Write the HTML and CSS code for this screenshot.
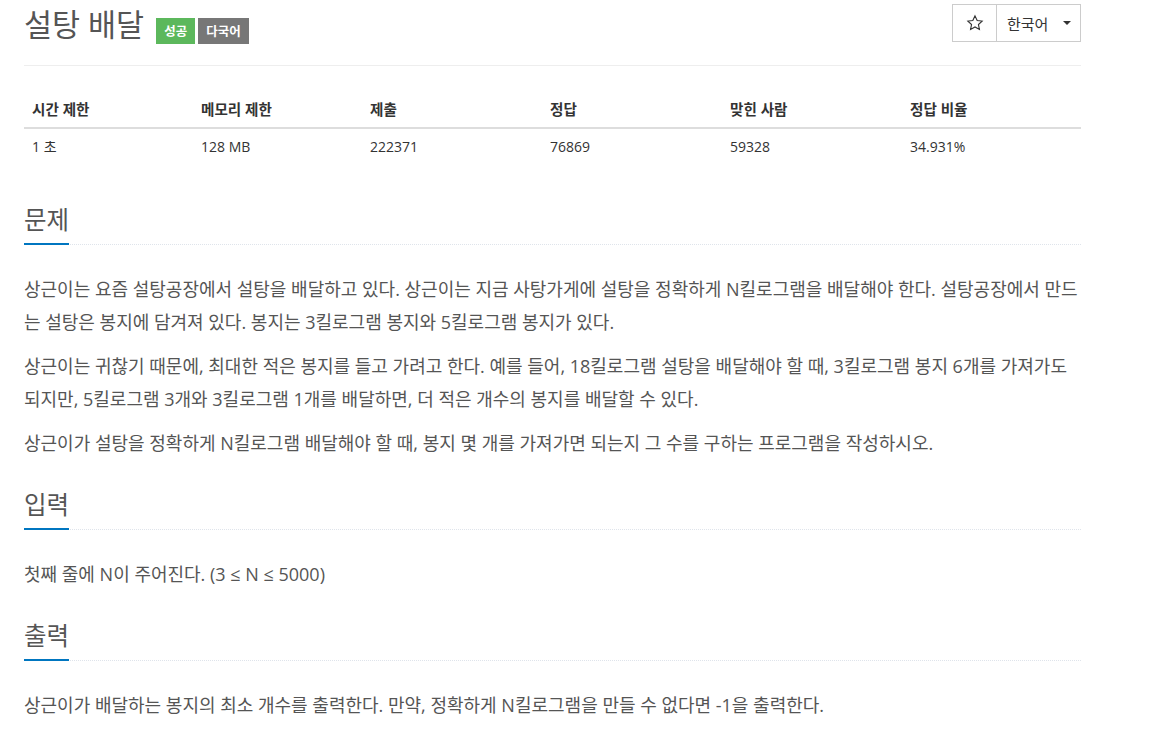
FILE: index.html
```html
<!DOCTYPE html>
<html lang="ko">
<head>
<meta charset="utf-8">
<title>설탕 배달</title>
<link rel="stylesheet" href="styles.css">
</head>
<body>
<div class="page">
  <header class="page-header">
    <div class="title-row">
      <h1 class="title">설탕 배달</h1>
      <span class="label label-success">성공</span>
      <span class="label label-default">다국어</span>
    </div>
    <div class="btn-group">
      <button class="btn btn-star" type="button">
        <svg class="star-icon" width="18" height="18" viewBox="0 0 24 24"><polygon points="12,2.5 14.9,8.6 21.5,9.4 16.6,14 17.9,20.6 12,17.3 6.1,20.6 7.4,14 2.5,9.4 9.1,8.6" fill="none" stroke="#333" stroke-width="1.5" stroke-linejoin="miter"/></svg>
      </button>
      <button class="btn btn-lang" type="button">한국어<span class="caret"></span></button>
    </div>
  </header>

  <table class="info-table">
    <colgroup>
      <col class="col-narrow">
      <col class="col-narrow">
      <col class="col-wide">
      <col class="col-wide">
      <col class="col-wide">
      <col>
    </colgroup>
    <thead>
      <tr><th>시간 제한</th><th>메모리 제한</th><th>제출</th><th>정답</th><th>맞힌 사람</th><th>정답 비율</th></tr>
    </thead>
    <tbody>
      <tr><td>1 초</td><td>128 MB</td><td>222371</td><td>76869</td><td>59328</td><td>34.931%</td></tr>
    </tbody>
  </table>

  <section class="section">
    <div class="headline"><h2>문제</h2></div>
    <div class="problem-text">
      <p>상근이는 요즘 설탕공장에서 설탕을 배달하고 있다. 상근이는 지금 사탕가게에 설탕을 정확하게 N킬로그램을 배달해야 한다. 설탕공장에서 만드는 설탕은 봉지에 담겨져 있다. 봉지는 3킬로그램 봉지와 5킬로그램 봉지가 있다.</p>
      <p>상근이는 귀찮기 때문에, 최대한 적은 봉지를 들고 가려고 한다. 예를 들어, 18킬로그램 설탕을 배달해야 할 때, 3킬로그램 봉지 6개를 가져가도 되지만, 5킬로그램 3개와 3킬로그램 1개를 배달하면, 더 적은 개수의 봉지를 배달할 수 있다.</p>
      <p>상근이가 설탕을 정확하게 N킬로그램 배달해야 할 때, 봉지 몇 개를 가져가면 되는지 그 수를 구하는 프로그램을 작성하시오.</p>
    </div>
  </section>

  <section class="section">
    <div class="headline"><h2>입력</h2></div>
    <div class="problem-text">
      <p>첫째 줄에 N이 주어진다. (3 ≤ N ≤ 5000)</p>
    </div>
  </section>

  <section class="section">
    <div class="headline"><h2>출력</h2></div>
    <div class="problem-text">
      <p>상근이가 배달하는 봉지의 최소 개수를 출력한다. 만약, 정확하게 N킬로그램을 만들 수 없다면 -1을 출력한다.</p>
    </div>
  </section>
</div>
</body>
</html>
```

FILE: styles.css
```css
html, body {
  margin: 0;
  padding: 0;
  background: #fff;
}

body {
  font-family: "Open Sans", "Noto Sans CJK KR", sans-serif;
  font-size: 14px;
  color: #333;
}

.page {
  width: 1057px;
  margin-left: 24px;
  display: flex;
  flex-direction: column;
}

/* header */
.page-header {
  display: flex;
  justify-content: space-between;
  align-items: flex-start;
  padding-bottom: 17px;
  border-bottom: 1px solid #eee;
}

.title-row {
  display: flex;
  align-items: flex-start;
}

.title {
  margin: 0 12px 0 0;
  font-size: 30.5px;
  line-height: 48px;
  font-weight: normal;
  color: #555;
}

.label {
  margin-top: 18px;
  height: 26px;
  box-sizing: border-box;
  padding: 2px 8px 0;
  display: flex;
  align-items: center;
  font-size: 12.5px;
  font-weight: bold;
  line-height: 1;
  color: #fff;
}

.label + .label {
  margin-left: 3px;
}

.label-success {
  background: #5cb85c;
}

.label-default {
  background: #777;
}

.btn-group {
  margin-top: 4px;
  display: flex;
  height: 38px;
}

.btn {
  box-sizing: border-box;
  height: 38px;
  margin: 0;
  padding: 0;
  border: 1px solid #ccc;
  background: #fff;
  display: flex;
  align-items: center;
  font-family: "Open Sans", "Noto Sans CJK KR", sans-serif;
  font-size: 15px;
  color: #333;
}

.btn-star {
  width: 45px;
  justify-content: center;
}

.star-icon {
  display: block;
}

.btn-lang {
  width: 85px;
  margin-left: -1px;
  padding: 0 9px 0 10px;
  justify-content: space-between;
}

.caret {
  width: 0;
  height: 0;
  border-top: 4px solid #333;
  border-left: 4px solid transparent;
  border-right: 4px solid transparent;
}

/* info table */
.info-table {
  width: 100%;
  border-collapse: collapse;
  table-layout: fixed;
  margin: 25px 0 10px;
}

.col-narrow {
  width: 169px;
}

.col-wide {
  width: 180px;
}

.info-table th,
.info-table td {
  padding: 8px;
  line-height: 20px;
  text-align: left;
  color: #333;
}

.info-table th {
  font-size: 14.6px;
  font-weight: bold;
  border-bottom: 2px solid #ddd;
}

.info-table td {
  font-size: 14px;
}

/* sections */
.section {
  margin-top: 30px;
}

.headline {
  display: flex;
  border-bottom: 1px dotted #dfe4eb;
}

.headline h2 {
  margin: 0 0 -1px;
  padding-bottom: 8px;
  border-bottom: 2px solid #0076c0;
  font-size: 24.5px;
  line-height: 30px;
  font-weight: normal;
  color: #555;
}

.problem-text {
  margin-top: 28px;
  display: flex;
  flex-direction: column;
  gap: 11px;
  font-size: 18px;
  line-height: 33px;
  color: #555;
}

.problem-text p {
  margin: 0;
}
```
